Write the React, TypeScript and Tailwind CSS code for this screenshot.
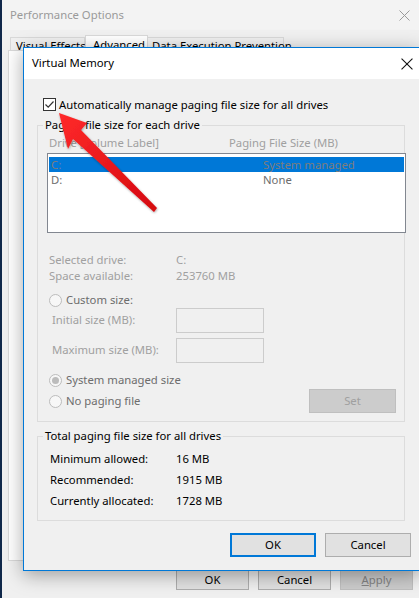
import React from "react";

const font = { fontFamily: '"Noto Sans", "Liberation Sans", sans-serif' };

function CloseX({ color, size = 11 }: { color: string; size?: number }) {
  return (
    <svg width={size} height={size} viewBox="0 0 11 11">
      <path d="M0.5 0.5 L10.5 10.5 M10.5 0.5 L0.5 10.5" stroke={color} strokeWidth="1" />
    </svg>
  );
}

function Radio({ checked }: { checked?: boolean }) {
  return (
    <span className="w-[13px] h-[13px] rounded-full border border-[#bcbcbc] bg-[#f7f7f7] flex items-center justify-center shrink-0">
      {checked ? <span className="w-[7px] h-[7px] rounded-full bg-[#bcbcbc]" /> : null}
    </span>
  );
}

function Arrow() {
  return (
    <svg className="absolute left-0 top-0 pointer-events-none" width="419" height="598" viewBox="0 0 419 598">
      <defs>
        <linearGradient id="ag" x1="0" y1="0" x2="1" y2="1">
          <stop offset="0" stopColor="#ff2a2a" />
          <stop offset="1" stopColor="#d4080f" />
        </linearGradient>
        <filter id="sh" x="-20%" y="-20%" width="140%" height="140%">
          <feDropShadow dx="0.5" dy="1" stdDeviation="1" floodColor="#000" floodOpacity="0.35" />
        </filter>
      </defs>
      <polygon
        points="57,113 85,123 79,130 155,208 152,212 71,139 66,149"
        fill="url(#ag)"
        filter="url(#sh)"
        strokeLinejoin="round"
      />
    </svg>
  );
}

export default function App() {
  return (
    <div className="relative w-[419px] h-[598px] overflow-hidden bg-[#f0f0f0] border-l-[2px] border-[#10284a] text-[11.3px] text-black" style={font}>
      {/* Parent window: Performance Options */}
      <div className="h-[30px] flex items-center justify-between pl-[8px] pr-[9px] bg-[#f3f3f3]">
        <span className="text-[#9a9a9a] text-[11.3px]">Performance Options</span>
        <CloseX color="#9a9a9a" />
      </div>
      <div className="flex items-end h-[20px] pl-[8px]">
        <div className="w-[75px] h-[13px] pl-[5px] border border-b-0 border-[#d9d9d9] bg-[#f0f0f0] leading-[16px] whitespace-nowrap">Visual Effects</div>
        <div className="w-[63px] h-[15px] pl-[7px] border border-b-0 border-[#d9d9d9] bg-white leading-[18px] whitespace-nowrap">Advanced</div>
        <div className="w-[136px] h-[13px] pl-[4px] border border-b-0 border-l-0 border-[#d9d9d9] bg-[#f0f0f0] leading-[16px] whitespace-nowrap">Data Execution Prevention</div>
      </div>
      <div className="ml-[6px] mr-[6px] h-[511px] bg-white border border-[#d9d9d9]" />
      <div className="flex justify-end gap-[9px] pr-[6px] mt-[9px]">
        <div className="w-[73px] h-[20px] bg-[#e1e1e1] border border-[#adadad] flex items-center justify-center">OK</div>
        <div className="w-[73px] h-[20px] bg-[#e1e1e1] border border-[#adadad] flex items-center justify-center">Cancel</div>
        <div className="w-[73px] h-[20px] bg-[#cccccc] border border-[#bfbfbf] flex items-center justify-center text-[#838383]">
          <span><span className="underline">A</span>pply</span>
        </div>
      </div>

      {/* Virtual Memory dialog */}
      <div className="absolute left-[21px] top-[47px] w-[398px] h-[524px] border-l border-t border-b border-[#0078d7] bg-[#f0f0f0] shadow-[0_4px_18px_rgba(0,0,0,0.35)]">
        <div className="h-[31px] bg-white flex items-center justify-between pl-[8px] pr-[8px]">
          <span>Virtual Memory</span>
          <CloseX color="#111" size={12} />
        </div>
        <div className="pl-[13px]">
          <div className="mt-[19px] h-[13px] flex items-center ml-[6px]">
            <span className="w-[13px] h-[13px] border border-[#333] bg-white flex items-center justify-center shrink-0">
              <svg width="11" height="11" viewBox="0 0 11 11">
                <path d="M1.5 5.5 L4.2 8.2 L9.5 2.5" stroke="#333" strokeWidth="1.2" fill="none" />
              </svg>
            </span>
            <span className="ml-[3px] leading-[16px]">Automatically manage paging file size for all drives</span>
          </div>

          <fieldset className="mt-[6px] w-[368px] min-w-0 border border-[#dcdcdc] p-0">
            <legend className="ml-[5px] px-[2px] leading-[16px]">Paging file size for each drive</legend>
            <div className="pl-[9px] pb-[8px]">
              <div className="mt-[2px] h-[16px] flex leading-[16px] text-[#a0a0a0]">
                <span className="ml-[2px] w-[180px]">Drive  [Volume Label]</span>
                <span>Paging File Size (MB)</span>
              </div>
              <div className="mt-[2px] w-[359px] h-[80px] border border-[#828790] bg-white pt-[3px] px-[1px]">
                <div className="h-[15px] bg-[#0078d7] flex items-center leading-[14px] text-[#7d7d7d]">
                  <span className="ml-[2px] w-[212px]">C:</span>
                  <span>System managed</span>
                </div>
                <div className="h-[15px] flex items-center leading-[14px] text-[#6d6d6d]">
                  <span className="ml-[2px] w-[212px]">D:</span>
                  <span>None</span>
                </div>
              </div>
              <div className="mt-[19px] leading-[16px] text-[#a0a0a0]">
                <div className="flex ml-[2px]"><span className="w-[127px]">Selected drive:</span><span>C:</span></div>
                <div className="flex ml-[2px]"><span className="w-[127px]">Space available:</span><span>253760 MB</span></div>
              </div>
              <div className="mt-[8px] h-[16px] flex items-center ml-[2px] text-[#6d6d6d]">
                <Radio />
                <span className="ml-[4px] leading-[16px]">Custom size:</span>
              </div>
              <div className="h-[25px] flex items-center ml-[5px] text-[#a0a0a0]">
                <span className="w-[124px]">Initial size (MB):</span>
                <span className="w-[88px] h-[25px] border border-[#cccccc] bg-[#f0f0f0]" />
              </div>
              <div className="mt-[5px] h-[25px] flex items-center ml-[5px] text-[#a0a0a0]">
                <span className="w-[124px]">Maximum size (MB):</span>
                <span className="w-[88px] h-[25px] border border-[#cccccc] bg-[#f0f0f0]" />
              </div>
              <div className="mt-[9px] h-[16px] flex items-center ml-[2px] text-[#6d6d6d]">
                <Radio checked />
                <span className="ml-[4px] leading-[16px]">System managed size</span>
              </div>
              <div className="mt-[1px] h-[24px] flex items-center justify-between ml-[2px] mr-[8px] text-[#6d6d6d]">
                <div className="flex items-center">
                  <Radio />
                  <span className="ml-[4px] leading-[16px]">No paging file</span>
                </div>
                <div className="w-[87px] h-[24px] bg-[#cccccc] border border-[#bfbfbf] flex items-center justify-center text-[#a0a0a0]">Set</div>
              </div>
            </div>
          </fieldset>

          <fieldset className="mt-[6px] w-[368px] min-w-0 border border-[#dcdcdc] p-0">
            <legend className="ml-[5px] px-[2px] leading-[16px]">Total paging file size for all drives</legend>
            <div className="pl-[12px] pb-[9px] mt-[4px] leading-[21px]">
              <div className="flex"><span className="w-[126px]">Minimum allowed:</span><span>16 MB</span></div>
              <div className="flex"><span className="w-[126px]">Recommended:</span><span>1915 MB</span></div>
              <div className="flex"><span className="w-[126px]">Currently allocated:</span><span>1728 MB</span></div>
            </div>
          </fieldset>
        </div>
        <div className="mt-[12px] flex justify-end gap-[9px] pr-[10px]">
          <div className="w-[86px] h-[24px] bg-[#e1e1e1] border-2 border-[#0078d7] flex items-center justify-center">OK</div>
          <div className="w-[86px] h-[24px] bg-[#e1e1e1] border border-[#adadad] flex items-center justify-center">Cancel</div>
        </div>
      </div>

      <Arrow />
    </div>
  );
}
